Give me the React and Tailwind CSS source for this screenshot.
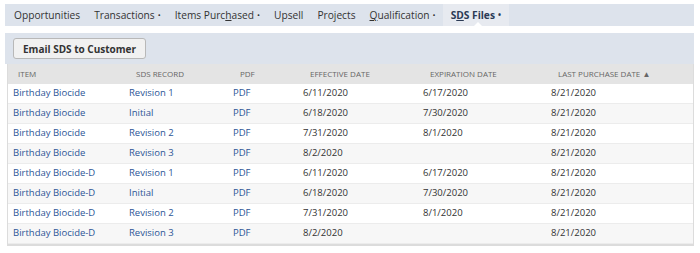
import React from "react";

const rows = [
  ["Birthday Biocide", "Revision 1", "6/11/2020", "6/17/2020"],
  ["Birthday Biocide", "Initial", "6/18/2020", "7/30/2020"],
  ["Birthday Biocide", "Revision 2", "7/31/2020", "8/1/2020"],
  ["Birthday Biocide", "Revision 3", "8/2/2020", ""],
  ["Birthday Biocide-D", "Revision 1", "6/11/2020", "6/17/2020"],
  ["Birthday Biocide-D", "Initial", "6/18/2020", "7/30/2020"],
  ["Birthday Biocide-D", "Revision 2", "7/31/2020", "8/1/2020"],
  ["Birthday Biocide-D", "Revision 3", "8/2/2020", ""],
];

const cols = "grid grid-cols-[116px_104px_70px_120px_128px_1fr]";

const Tab = ({ children, dot, active }) => (
  <div
    className={
      "relative flex items-center h-full " +
      (active ? "px-[8px] bg-[#e7eaf0] font-bold text-[#2b3a55]" : "px-[7px] text-[#333]")
    }
  >
    <span>{children}</span>
    {dot && <span className="ml-[3px] text-[8px]">•</span>}
    {active && (
      <span className="absolute bottom-[-1px] left-[30px] w-0 h-0 border-x-[5px] border-x-transparent border-b-[5px] border-b-white" />
    )}
  </div>
);

export default function App() {
  return (
    <div className="w-[700px] h-[253px] bg-white pt-[4px] pl-[5px] font-['Open_Sans',sans-serif]">
      <div className="w-[689px]">
        <div className="flex h-[22px] bg-[#dde3ec] pl-[2px] text-[10.2px] leading-none">
          <Tab>Opportunities</Tab>
          <Tab dot>Transactions</Tab>
          <Tab dot>
            Items Purc<span className="underline">h</span>ased
          </Tab>
          <Tab>Upsell</Tab>
          <Tab>Projects</Tab>
          <Tab dot>
            <span className="underline">Q</span>ualification
          </Tab>
          <Tab dot active>
            S<span className="underline">D</span>S Files
          </Tab>
        </div>
        <div className="h-[7px] bg-white" />
        <div className="bg-[#dde3ec] h-[31px] flex items-center pl-[8px]">
          <button className="h-[21px] px-[9px] bg-[#f1f1f1] border border-[#b8b8b8] rounded-[3px] text-[10px] font-bold text-[#333] leading-none">
            Email SDS to Customer
          </button>
        </div>
        <div className="border-l border-r border-b-2 border-[#dcdcdc] ml-[2px]">
          <div className={cols + " h-[20px] bg-[#e4e4e4] items-center text-[8px] text-[#666] uppercase"}>
            <div className="pl-[10px]">Item</div>
            <div className="pl-[12px]">SDS Record</div>
            <div className="pl-[12px]">PDF</div>
            <div className="pl-[12px]">Effective Date</div>
            <div className="pl-[12px]">Expiration Date</div>
            <div className="pl-[12px]">Last Purchase Date ▲</div>
          </div>
          {rows.map((r, i) => (
            <div
              key={i}
              className={
                cols +
                " h-[20px] items-center text-[9.5px] border-b border-[#ececec] " +
                (i % 2 === 1 ? "bg-[#f7f7f7]" : "bg-white")
              }
            >
              <div className="pl-[5px] text-[#2c5596]">{r[0]}</div>
              <div className="pl-[5px] text-[#2c5596]">{r[1]}</div>
              <div className="pl-[5px] text-[#2c5596]">PDF</div>
              <div className="pl-[5px] text-[#333]">{r[2]}</div>
              <div className="pl-[5px] text-[#333]">{r[3]}</div>
              <div className="pl-[5px] text-[#333]">8/21/2020</div>
            </div>
          ))}
        </div>
      </div>
    </div>
  );
}
